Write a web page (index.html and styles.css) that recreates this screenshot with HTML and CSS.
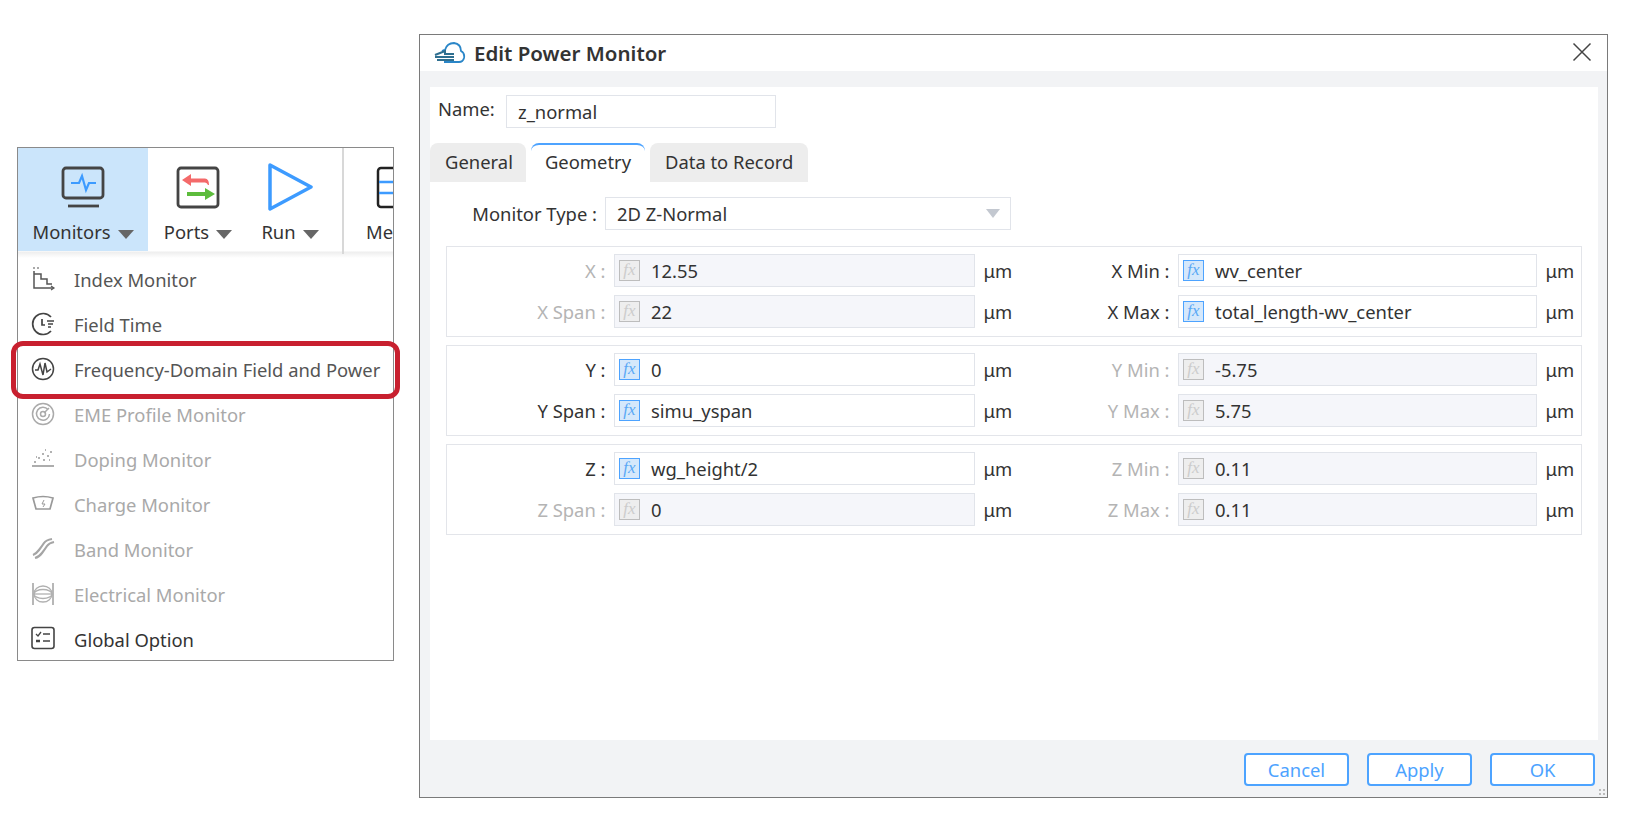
FILE: index.html
```html
<!DOCTYPE html>
<html lang="en">

<head>
    <meta charset="UTF-8">
    <meta name="viewport" content="width=device-width, initial-scale=1.0">
    <title>Edit Power Monitor</title>
    <link rel="stylesheet" href="styles.css">
</head>

<body>
    <!-- Toolbar with the opened Monitors menu -->
    <div class="panel">
        <div class="toolbar">
            <div class="tool tool-active tool-monitors">
                <svg class="tool-icon" width="46" height="44" viewBox="0 0 46 44">
                    <rect x="3" y="2" width="40" height="30" rx="3" fill="none" stroke="#444" stroke-width="2.800" />
                    <path d="M8 40H39" stroke="#444" stroke-width="2.800" />
                    <path d="M11 17H19L22 10L26 24L29 17H36" fill="none" stroke="#3d9bff" stroke-width="2.200" />
                </svg>
                <div class="tool-label">Monitors<span class="caret"></span></div>
            </div>
            <div class="tool tool-ports">
                <svg class="tool-icon" width="46" height="44" viewBox="0 0 46 44">
                    <rect x="3" y="2" width="40" height="39" rx="3" fill="none" stroke="#444" stroke-width="2.800" />
                    <path d="M16 8L7 14L16 20V16.500H30Q32 16.500 33 19H34Q34 12.500 30 12.500H16Z" fill="#f46a6a" />
                    <path d="M30 22L40 28L30 34V30H12V26H30Z" fill="#5cbc3c" />
                </svg>
                <div class="tool-label">Ports<span class="caret"></span></div>
            </div>
            <div class="tool tool-run">
                <svg class="tool-icon" width="46" height="50" viewBox="0 0 46 50">
                    <path d="M3 3L44 25L3 47Z" fill="none" stroke="#3d9bff" stroke-width="3.500" stroke-linejoin="round" />
                </svg>
                <div class="tool-label">Run<span class="caret"></span></div>
            </div>
            <div class="tool-sep"></div>
            <div class="tool tool-mesh">
                <svg class="tool-icon" width="46" height="44" viewBox="0 0 46 44">
                    <rect x="2" y="2" width="40" height="39" rx="3" fill="none" stroke="#222" stroke-width="2.500" />
                    <path d="M3 16H42M3 27H42" stroke="#3d9bff" stroke-width="2.500" />
                </svg>
                <div class="tool-label">Mesh</div>
            </div>
        </div>

        <div class="menu">
            <div class="menu-item">
                <svg class="menu-icon" width="26" height="26" viewBox="0 0 26 26" fill="none" stroke="#555" stroke-width="1.500">
                    <path d="M4 5V22H23" />
                    <path d="M4 8H11V13H17V18H22" />
                    <path d="M3 2H5M7 2H9M21 20L24 22L21 24" stroke-width="1.200" />
                </svg>
                <span>Index Monitor</span>
            </div>
            <div class="menu-item">
                <svg class="menu-icon" width="26" height="26" viewBox="0 0 26 26" fill="none" stroke="#444" stroke-width="1.700">
                    <path d="M21 6A10.500 10.500 0 1 0 21 20" />
                    <path d="M12 8V14H15" />
                    <path d="M17 10H24M18 13H23M18 16H21" stroke-width="1.300" />
                </svg>
                <span>Field Time</span>
            </div>
            <div class="menu-item menu-item-picked">
                <svg class="menu-icon" width="26" height="26" viewBox="0 0 26 26" fill="none" stroke="#444" stroke-width="1.500">
                    <circle cx="13" cy="13" r="10.500" />
                    <path d="M5 14L8 14L10 8L13 19L15 7L17 16L21 13" />
                </svg>
                <span>Frequency-Domain Field and Power</span>
            </div>
            <div class="menu-item menu-item-off">
                <svg class="menu-icon" width="26" height="26" viewBox="0 0 26 26" fill="none" stroke="#aaa" stroke-width="1.500">
                    <circle cx="13" cy="13" r="10.500" />
                    <path d="M18 8.500A6.500 6.500 0 1 0 19.500 13" />
                    <circle cx="13" cy="13" r="2.500" />
                    <path d="M14 12L19 7" />
                </svg>
                <span>EME Profile Monitor</span>
            </div>
            <div class="menu-item menu-item-off">
                <svg class="menu-icon" width="26" height="26" viewBox="0 0 26 26" fill="none" stroke="#999" stroke-width="1.600">
                    <path d="M2 20H24" />
                    <path d="M4 16H6M8 12H10M12 8H14M13 14H15M17 10H19M20 6H22M6 11H7M15 4H16M19 14H20" stroke-dasharray="2 1" />
                </svg>
                <span>Doping Monitor</span>
            </div>
            <div class="menu-item menu-item-off">
                <svg class="menu-icon" width="26" height="26" viewBox="0 0 26 26" fill="none" stroke="#999" stroke-width="1.700">
                    <path d="M3 7Q13 4 23 7L20 18H6Z" />
                    <path d="M14 9L12 13H15L13 16" stroke-width="1" />
                </svg>
                <span>Charge Monitor</span>
            </div>
            <div class="menu-item menu-item-off">
                <svg class="menu-icon" width="26" height="26" viewBox="0 0 26 26" fill="none" stroke="#a5a5a5" stroke-width="2.200">
                    <path d="M3 19Q6 18 9 14T14 7T22 3" />
                    <path d="M5 22Q9 21 12 17T17 10T24 6" />
                </svg>
                <span>Band Monitor</span>
            </div>
            <div class="menu-item menu-item-off">
                <svg class="menu-icon" width="26" height="26" viewBox="0 0 26 26" fill="none" stroke="#b0b0b0" stroke-width="1.300">
                    <path d="M3 2V24M23 2V24" stroke-width="1.800" />
                    <ellipse cx="13" cy="13" rx="9" ry="8" />
                    <ellipse cx="13" cy="13" rx="9" ry="4.500" />
                    <path d="M4 13H22" />
                </svg>
                <span>Electrical Monitor</span>
            </div>
            <div class="menu-item menu-item-strong">
                <svg class="menu-icon" width="26" height="26" viewBox="0 0 26 26" fill="none" stroke="#444" stroke-width="1.600">
                    <rect x="2" y="1.500" width="22" height="21" rx="2.500" />
                    <path d="M6 8L8 10L11 6M13 8H20M13 15H20" stroke-width="1.300" />
                    <path d="M6 15H10" stroke-width="2.500" />
                </svg>
                <span>Global Option</span>
            </div>
        </div>
    </div>

    <!-- Edit dialog -->
    <div class="dialog">
        <div class="dialog-title">
            <svg class="cloud" width="32" height="22" viewBox="0 0 32 22" fill="none">
                <path d="M8 9Q10 8 11 8Q13 1 20 1Q27 2 27 9Q31 11 30 16Q29 20 25 20H10" stroke="#2a86c8" stroke-width="1.800" />
                <path d="M1 13L11 9V12H20M1 15H20M3 18H20" stroke="#2f6f90" stroke-width="2" />
            </svg>
            <span class="dialog-name">Edit Power Monitor</span>
            <svg class="close" width="20" height="20" viewBox="0 0 20 20">
                <path d="M1.500 1.500L18.500 18.500M18.500 1.500L1.500 18.500" stroke="#444" stroke-width="1.500" />
            </svg>
        </div>

        <div class="dialog-body">
            <div class="name-row">
                <label>Name:</label>
                <div class="name-input">z_normal</div>
            </div>

            <div class="tabs">
                <div class="tab tab-general">General</div>
                <div class="tab tab-active">Geometry</div>
                <div class="tab">Data to Record</div>
            </div>

            <div class="type-row">
                <label>Monitor Type :</label>
                <div class="combo">2D Z-Normal<span class="combo-caret"></span></div>
            </div>

            <div class="group">
                <label class="off">X :</label>
                <div class="field off"><i class="fx">fx</i>12.55</div>
                <span class="unit">μm</span>
                <label>X Min :</label>
                <div class="field"><i class="fx">fx</i>wv_center</div>
                <span class="unit">μm</span>
                <label class="off">X Span :</label>
                <div class="field off"><i class="fx">fx</i>22</div>
                <span class="unit">μm</span>
                <label>X Max :</label>
                <div class="field"><i class="fx">fx</i>total_length-wv_center</div>
                <span class="unit">μm</span>
            </div>

            <div class="group">
                <label>Y :</label>
                <div class="field"><i class="fx">fx</i>0</div>
                <span class="unit">μm</span>
                <label class="off">Y Min :</label>
                <div class="field off"><i class="fx">fx</i>-5.75</div>
                <span class="unit">μm</span>
                <label>Y Span :</label>
                <div class="field"><i class="fx">fx</i>simu_yspan</div>
                <span class="unit">μm</span>
                <label class="off">Y Max :</label>
                <div class="field off"><i class="fx">fx</i>5.75</div>
                <span class="unit">μm</span>
            </div>

            <div class="group">
                <label>Z :</label>
                <div class="field"><i class="fx">fx</i>wg_height/2</div>
                <span class="unit">μm</span>
                <label class="off">Z Min :</label>
                <div class="field off"><i class="fx">fx</i>0.11</div>
                <span class="unit">μm</span>
                <label class="off">Z Span :</label>
                <div class="field off"><i class="fx">fx</i>0</div>
                <span class="unit">μm</span>
                <label class="off">Z Max :</label>
                <div class="field off"><i class="fx">fx</i>0.11</div>
                <span class="unit">μm</span>
            </div>
        </div>

        <div class="dialog-foot">
            <button class="btn">Cancel</button>
            <button class="btn">Apply</button>
            <button class="btn">OK</button>
        </div>
        <div class="grip"></div>
    </div>
</body>

</html>
```

FILE: styles.css
```css
:root {
    --blue: #4da3ff;
    --line: #e1e4ea;
    --text: #333;
    --text-off: #b4b4b4;
}

* {
    box-sizing: border-box;
}

body {
    display: flex;
    align-items: flex-start;
    margin: 0;
    height: 820px;
    overflow: hidden;
    background-color: #fff;
    color: var(--text);
    font-family: "Noto Sans", "Open Sans", sans-serif;
    font-size: 18.4px;
}

/* left panel */

.panel {
    width: 377px;
    height: 514px;
    margin: 147px 0 0 17px;
    border: 1px solid #8a8a8a;
}

.toolbar {
    display: flex;
    height: 110px;
    overflow: hidden;
    background: linear-gradient(#fff 103px, #eee 104px, #fff 110px);
}

.tool {
    flex: none;
    height: 103px;
    padding-top: 18px;
    text-align: center;
}

.tool-icon {
    display: block;
    margin: 0 auto;
}

.tool-active {
    background-color: #cbe5fb;
}

.tool-monitors {
    width: 130px;
}

.tool-ports {
    width: 100px;
}

.tool-run {
    width: 94px;
    padding-top: 14px;
    padding-right: 10px;
}

.tool-run .tool-label {
    margin-top: 8px;
}

.tool-sep {
    flex: none;
    width: 2px;
    height: 106px;
    background-color: #d8d8d8;
}

.tool-mesh {
    width: 60px;
    padding-left: 22px;
    text-align: left;
}

.tool-mesh .tool-icon {
    margin: 0 0 0 10px;
}

.tool-label {
    margin-top: 10px;
    color: #333;
    line-height: 24px;
    white-space: nowrap;
}

.caret {
    display: inline-block;
    margin-left: 7px;
    border-top: 9px solid #666;
    border-left: 8px solid transparent;
    border-right: 8px solid transparent;
}

.menu-item {
    position: relative;
    display: flex;
    align-items: center;
    height: 45px;
    padding-left: 12px;
    color: #555;
    white-space: nowrap;
}

.menu-item span {
    margin-top: -2px;
}

.menu-icon {
    flex: none;
    margin-top: -3px;
    margin-right: 18px;
}

.menu-item-off {
    color: #a9a9a9;
}

.menu-item-strong {
    color: #333;
}

/* red marker round the picked row */
.menu-item-picked::after {
    content: "";
    position: absolute;
    top: -7px;
    left: -7px;
    right: -7px;
    bottom: -6px;
    border: 5.500px solid #c8202f;
    border-radius: 12px;
}

/* dialog */

.dialog {
    position: relative;
    display: flex;
    flex-direction: column;
    width: 1189px;
    height: 764px;
    margin: 34px 0 0 25px;
    border: 1px solid #7a7a7a;
    background-color: #f2f3f5;
}

.dialog-title {
    display: flex;
    align-items: center;
    flex: none;
    height: 36px;
    padding: 0 15px 0 14px;
    background-color: #fff;
}

.cloud {
    flex: none;
    margin-right: 8px;
}

.dialog-name {
    flex: 1;
    color: #333;
    font-size: 20.500px;
    font-weight: 600;
}

.close {
    margin-top: -3px;
}

.dialog-body {
    flex: none;
    height: 653px;
    margin: 16px 9px 0 10px;
    padding-top: 8px;
    background-color: #fff;
}

.name-row {
    display: flex;
    align-items: center;
    height: 33px;
    padding-left: 8px;
}

.name-row label {
    width: 68px;
    margin-top: -6px;
}

.name-input {
    width: 270px;
    height: 33px;
    padding-left: 11px;
    border: 1px solid var(--line);
    line-height: 31px;
}

.tabs {
    display: flex;
    gap: 5px;
    margin-top: 15px;
}

.tab {
    height: 39px;
    padding: 0 15px;
    border-radius: 8px 8px 0 0;
    background-color: #ededed;
    line-height: 38px;
}

.tab-general {
    width: 96px;
    padding: 0 0 0 2px;
    text-align: center;
}

.tab-active {
    width: 114px;
    padding: 0;
    border-top: 2px solid var(--blue);
    background-color: #fff;
    line-height: 34px;
    text-align: center;
}

.type-row {
    display: flex;
    align-items: center;
    margin: 15px 0 16px;
}

.type-row label {
    width: 167px;
    text-align: right;
}

.combo {
    position: relative;
    width: 406px;
    height: 33px;
    margin-left: 8px;
    padding-left: 11px;
    border: 1px solid var(--line);
    line-height: 31px;
}

.combo-caret {
    position: absolute;
    top: 11px;
    right: 10px;
    border-top: 9px solid #c3c8d0;
    border-left: 7px solid transparent;
    border-right: 7px solid transparent;
}

.group {
    display: grid;
    grid-template-columns: 160px 361px 40px 142px 359px 1fr;
    grid-auto-rows: 33px;
    align-content: start;
    column-gap: 7px;
    row-gap: 8px;
    align-items: center;
    width: 1136px;
    height: 91px;
    margin: 0 0 8px 16px;
    padding-top: 7px;
    border: 1px solid #e3e5ea;
}

.group label {
    padding-right: 1.500px;
    text-align: right;
}

.group label.off {
    color: var(--text-off);
}

.field {
    display: flex;
    align-items: center;
    height: 33px;
    padding-left: 4px;
    border: 1px solid var(--line);
}

.field.off {
    background-color: #f5f6fa;
}

.fx {
    flex: none;
    width: 21px;
    height: 21px;
    margin-right: 11px;
    border: 1.500px solid var(--blue);
    background-color: #d5e8fb;
    color: #5aa9f5;
    font-family: "Liberation Serif", serif;
    font-size: 17px;
    line-height: 17px;
    text-align: center;
}

.field.off .fx {
    border-color: #bdbdbd;
    background-color: #eee;
    color: #ccc;
}

.unit {
    padding-left: 1.500px;
}

.dialog-foot {
    display: flex;
    justify-content: flex-end;
    gap: 18px;
    padding: 13px 12px 0 0;
}

.btn {
    width: 105px;
    height: 33px;
    padding: 0;
    border: 2px solid var(--blue);
    border-radius: 4px;
    background-color: #fff;
    color: var(--blue);
    font-family: inherit;
    font-size: 18.400px;
}

.grip {
    position: absolute;
    right: 1px;
    bottom: 1px;
    width: 8px;
    height: 8px;
    background:
        radial-gradient(circle, #bbb 1px, transparent 1.500px) 0 0 / 4px 4px;
}
```
